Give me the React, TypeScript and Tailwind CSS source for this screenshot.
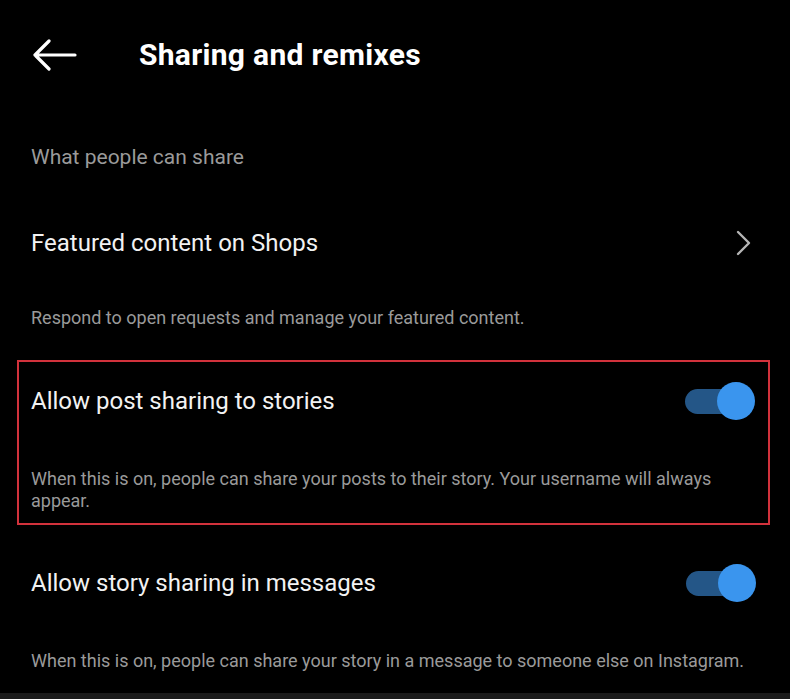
import React from 'react';

const Toggle = () => (
  <div className="relative w-[72px] h-[40px] shrink-0">
    <div className="absolute left-[1px] top-[8px] w-[56px] h-[25px] rounded-full bg-[#245687]" />
    <div className="absolute left-[33px] top-[1px] w-[38px] h-[38px] rounded-full bg-[#3a95ee]" />
  </div>
);

export default function App() {
  return (
    <div
      className="w-[790px] h-[699px] bg-black text-white overflow-hidden flex flex-col"
      style={{ fontFamily: 'Roboto, "Noto Sans", sans-serif' }}
    >
      {/* header */}
      <div className="h-[110px] flex items-center shrink-0">
        <svg className="ml-[32px] w-[45px] h-[32px]" viewBox="0 0 45 32" fill="none" stroke="#fff" strokeWidth="3.2" strokeLinecap="round" strokeLinejoin="round">
          <path d="M43 16H3M17 2L3 16l14 14" />
        </svg>
        <h1 className="ml-[62px] text-[30px] font-bold tracking-[0.3px] leading-none">Sharing and remixes</h1>
      </div>

      <div className="h-[94px] flex items-center px-[31px] pt-[2px] shrink-0">
        <span className="text-[21px] text-[#9a9a9a]">What people can share</span>
      </div>

      {/* Featured content row */}
      <div className="h-[76px] flex items-center justify-between px-[31px] pt-[2px] shrink-0">
        <span className="text-[24px] text-[#f2f2f2]">Featured content on Shops</span>
        <svg className="mr-[8px] w-[16px] h-[26px]" viewBox="0 0 16 26" fill="none" stroke="#b5b5b5" strokeWidth="2.4" strokeLinecap="round" strokeLinejoin="round">
          <path d="M3 2l11 11L3 24" />
        </svg>
      </div>
      <div className="h-[80px] pt-[24px] px-[31px] shrink-0">
        <span className="text-[18px] text-[#9a9a9a]">Respond to open requests and manage your featured content.</span>
      </div>

      {/* highlighted row */}
      <div className="ml-[17px] w-[753px] h-[165px] border-2 border-[#d2323c] flex flex-col shrink-0">
        <div className="h-[78px] flex items-center justify-between pl-[12px] pr-[12px] shrink-0">
          <span className="text-[24px] text-[#f2f2f2]">Allow post sharing to stories</span>
          <Toggle />
        </div>
        <p className="pl-[12px] pr-[30px] text-[18px] leading-[22px] text-[#9a9a9a] pt-[28px]">
          When this is on, people can share your posts to their story. Your username will always appear.
        </p>
      </div>

      {/* story sharing row */}
      <div className="h-[94px] flex items-center justify-between pl-[31px] pr-[33px] pt-[22px] shrink-0">
        <span className="text-[24px] text-[#f2f2f2]">Allow story sharing in messages</span>
        <Toggle />
      </div>
      <div className="pt-[28px] px-[31px] shrink-0">
        <span className="text-[18px] text-[#9a9a9a]">When this is on, people can share your story in a message to someone else on Instagram.</span>
      </div>
      <div className="flex-1" />
      <div className="h-[6px] bg-[#1b1b1b] shrink-0" />
    </div>
  );
}
